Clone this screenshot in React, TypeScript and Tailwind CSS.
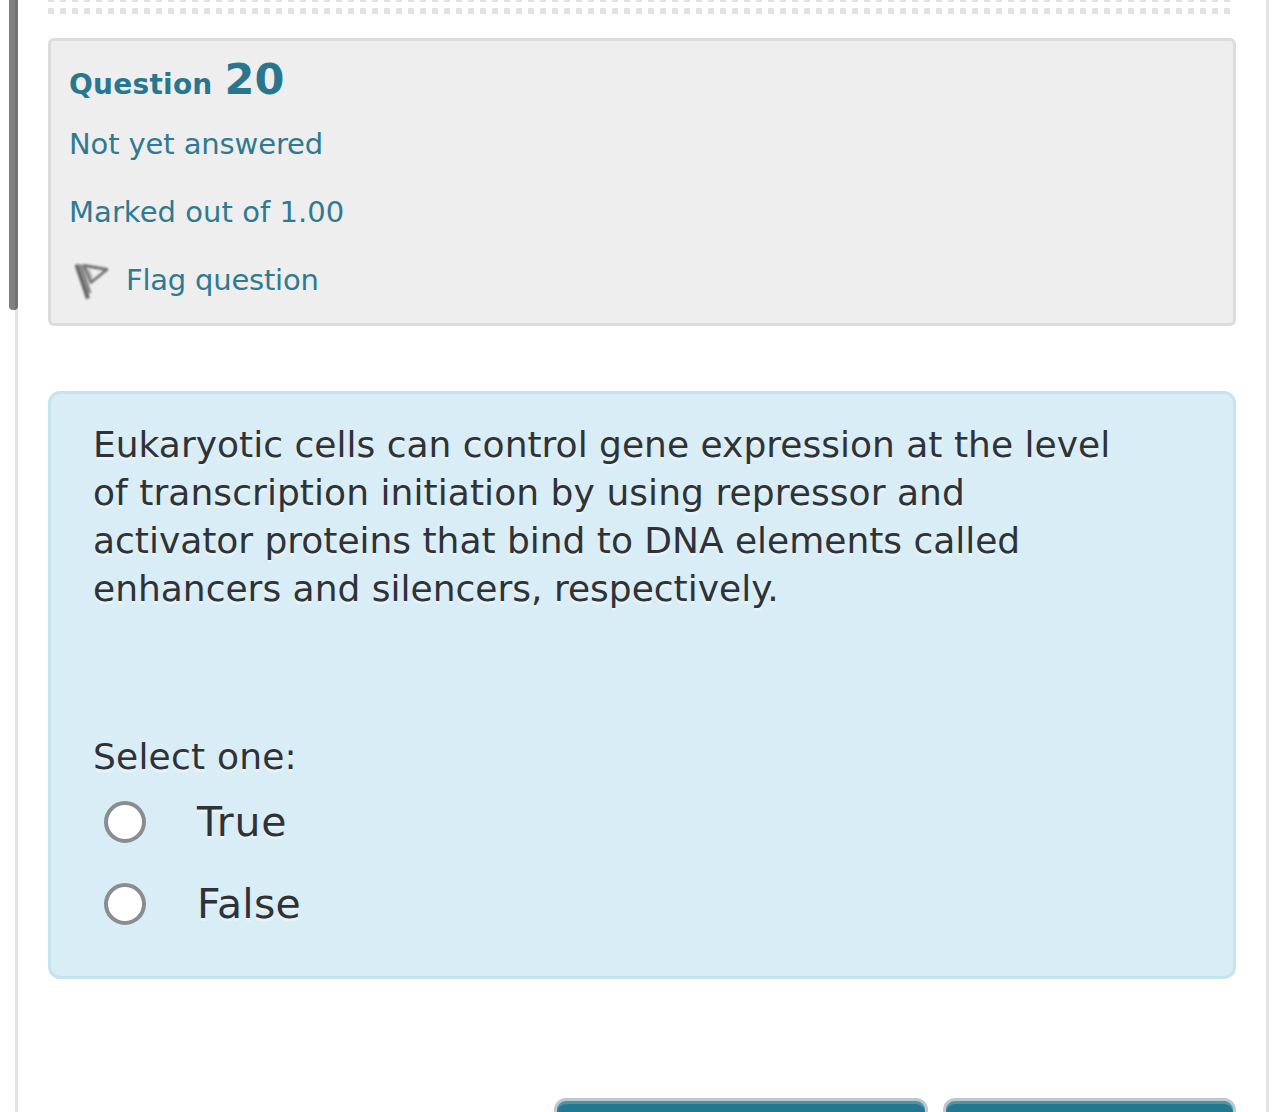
const questionLines = [
  { text: "Eukaryotic cells can control gene expression at the level", cls: "tracking-[0.01px]" },
  { text: "of transcription initiation by using repressor and", cls: "tracking-[0.06px]" },
  { text: "activator proteins that bind to DNA elements called", cls: "tracking-[-0.02px]" },
  { text: "enhancers and silencers, respectively.", cls: "tracking-[0px]" },
];

function FlagIcon() {
  return (
    <svg width="40" height="42" viewBox="0 0 40 42" fill="none" className="shrink-0 blur-[0.8px]">
      <path d="M7.5 5.5 L19 39.5" stroke="#666666" strokeWidth="4" />
      <path d="M11.5 5.5 L21 34" stroke="#7a7a7a" strokeWidth="2.6" />
      <path d="M15 6.5 L38 10.5 L22 23.5 Z" stroke="#707070" strokeWidth="2.8" strokeLinejoin="round" />
      <path d="M19.5 10.5 L23 19" stroke="#a0a0a0" strokeWidth="1.6" />
    </svg>
  );
}

function QuestionInfo() {
  return (
    <section className="h-[288px] rounded-[6px] border-3 border-[#dcdcdc] bg-[#eeeeee] pl-[18px] text-[29px] leading-[68px] text-[#2f7a91]">
      <h3 className="flex h-[69px] items-baseline whitespace-nowrap pt-[4px] font-bold leading-[68px] text-[#29778f]">
        <span className="text-[28px] tracking-[0.25px]">Question</span>
        <span className="ml-[12px] text-[43px]">20</span>
      </h3>
      <p className="h-[68px] whitespace-nowrap tracking-[-0.12px]">Not yet answered</p>
      <p className="h-[68px] whitespace-nowrap tracking-[0.05px]">Marked out of 1.00</p>
      <div className="flex h-[68px] items-center gap-[17px] whitespace-nowrap">
        <FlagIcon />
        <span className="tracking-[-0.22px]">Flag question</span>
      </div>
    </section>
  );
}

function Answer({ label, cls }: { label: string; cls: string }) {
  return (
    <label className="flex h-[82px] items-center pl-[11px] text-[41px]">
      <input
        type="radio"
        name="answer"
        className="size-[42px] shrink-0 appearance-none rounded-full border-4 border-[#8a8c90] bg-white"
      />
      <span className={`ml-[51px] whitespace-nowrap pt-[2px] ${cls}`}>{label}</span>
    </label>
  );
}

function QuestionBody() {
  return (
    <section className="mt-[65px] h-[588px] rounded-[12px] border-3 border-[#c3e5ed] bg-[#d8edf6] pl-[42px] pt-[27px] text-[#2f3236] [text-shadow:0_3px_0_rgba(255,255,255,0.4)]">
      <div className="text-[36px] leading-[48px]">
        {questionLines.map((line) => (
          <p key={line.text} className={`whitespace-nowrap ${line.cls}`}>
            {line.text}
          </p>
        ))}
      </div>
      <p className="mt-[120px] text-[36px] leading-[48px] tracking-[0.2px]">Select one:</p>
      <div>
        <Answer label="True" cls="tracking-[0.8px]" />
        <Answer label="False" cls="tracking-[0.2px]" />
      </div>
    </section>
  );
}

export default function App() {
  return (
    <div className="relative h-[1112px] w-[1284px] overflow-hidden bg-white font-['DejaVu_Sans',sans-serif]">
      <main className="ml-[15px] h-full w-[1254px] border-x-3 border-[#e3e3e3] px-[30px]">
        <div className="h-[14px] bg-[repeating-linear-gradient(90deg,#e2e2e2_0_6px,transparent_6px_12px)]">
          <div className="h-[8px] pt-[2px]">
            <div className="h-[6px] bg-white" />
          </div>
        </div>
        <div className="h-[24px]" />
        <QuestionInfo />
        <QuestionBody />
        <div className="mt-[119px] flex justify-end gap-[15px]">
          <button className="h-[90px] w-[374px] rounded-[12px] border-3 border-[#b9cacd] bg-[#217991] shadow-[inset_0_3px_0_#5b8da3]" />
          <button className="h-[90px] w-[293px] rounded-[12px] border-3 border-[#b9cacd] bg-[#217991] shadow-[inset_0_3px_0_#5b8da3]" />
        </div>
      </main>
      {/* scrollbar thumb */}
      <div className="absolute left-[9px] top-0 h-[310px] w-[9px] rounded-b-[4px] border-r-3 border-[#727272] bg-[#808080]" />
    </div>
  );
}
